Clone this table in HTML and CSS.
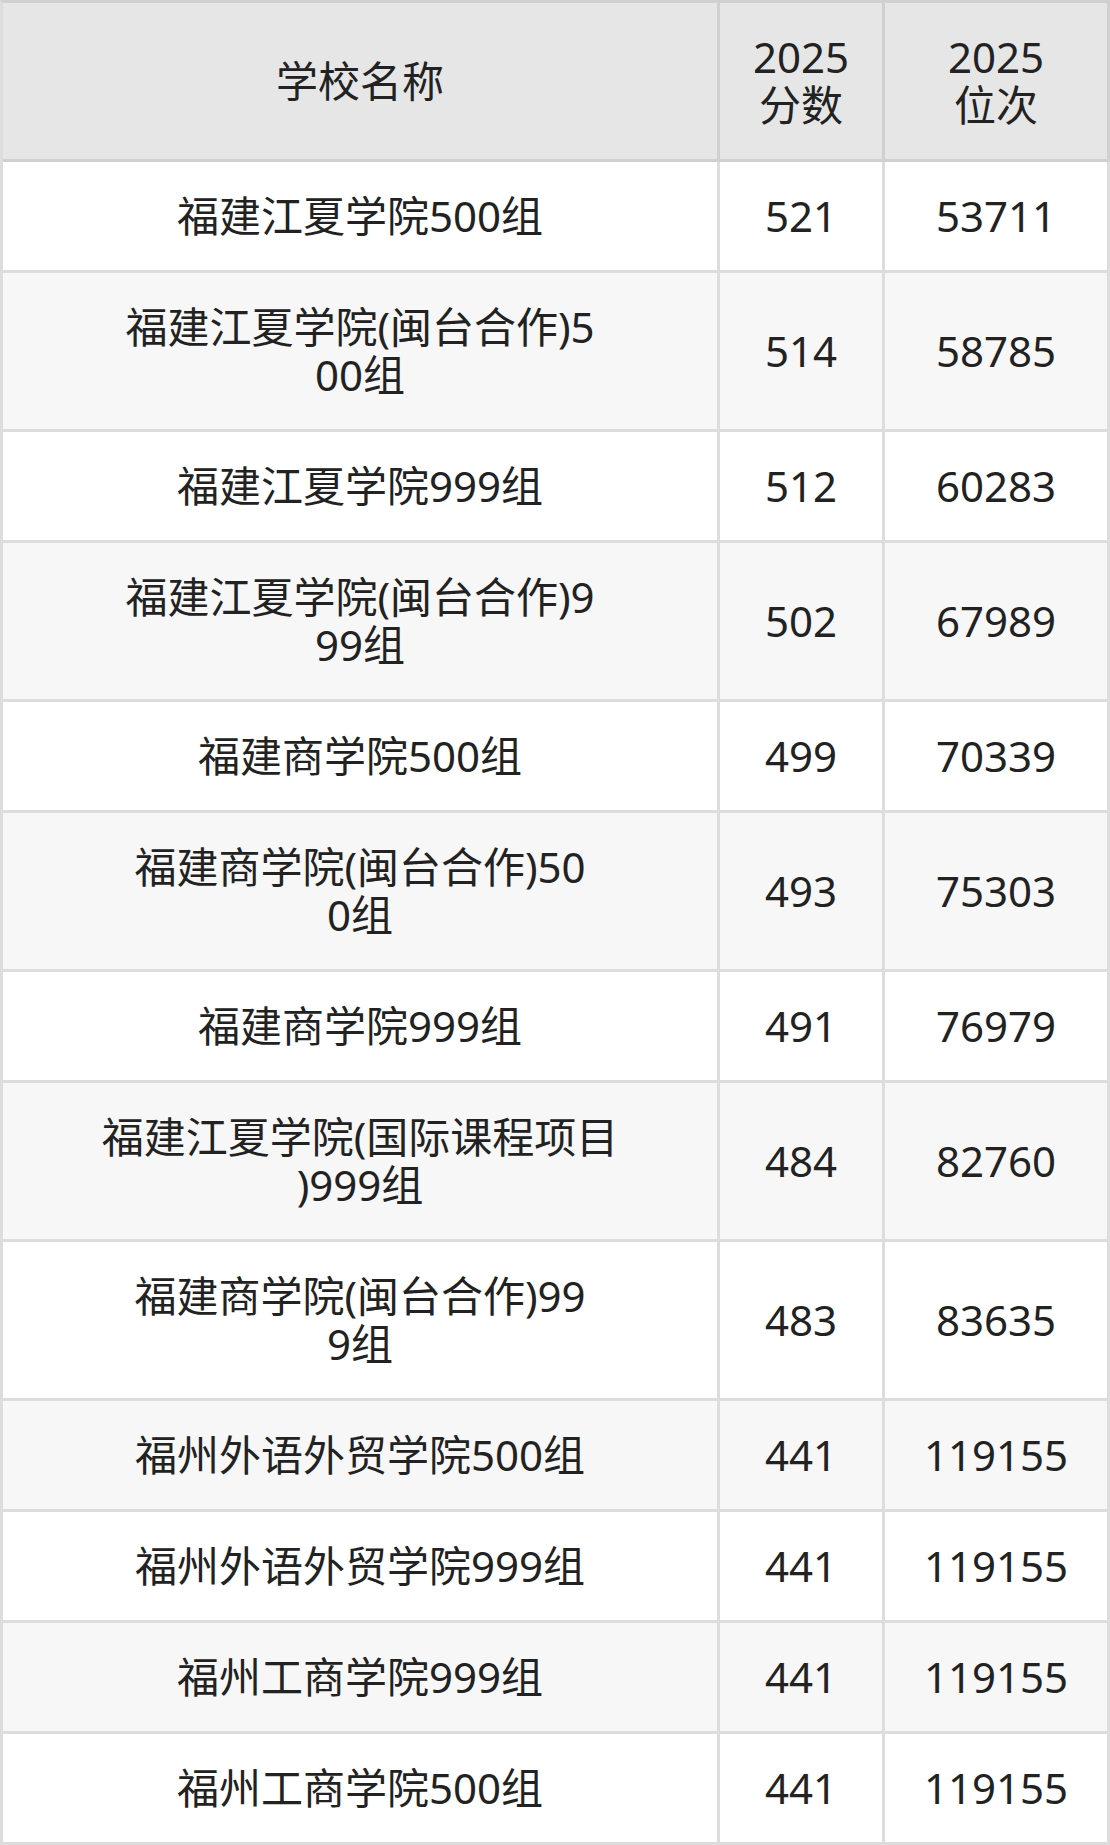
FILE: index.html
```html
<!DOCTYPE html>
<html lang="zh-CN">
<head>
<meta charset="utf-8">
<title>分数位次</title>
<link rel="stylesheet" href="styles.css">
</head>
<body>
<table class="score-table">
  <colgroup>
    <col class="col-name">
    <col class="col-score">
    <col class="col-rank">
  </colgroup>
  <thead>
    <tr>
      <th>学校名称</th>
      <th>2025<br>分数</th>
      <th>2025<br>位次</th>
    </tr>
  </thead>
  <tbody>
    <tr><td>福建江夏学院500组</td><td>521</td><td>53711</td></tr>
    <tr><td>福建江夏学院(闽台合作)5<br>00组</td><td>514</td><td>58785</td></tr>
    <tr><td>福建江夏学院999组</td><td>512</td><td>60283</td></tr>
    <tr><td>福建江夏学院(闽台合作)9<br>99组</td><td>502</td><td>67989</td></tr>
    <tr><td>福建商学院500组</td><td>499</td><td>70339</td></tr>
    <tr><td>福建商学院(闽台合作)50<br>0组</td><td>493</td><td>75303</td></tr>
    <tr><td>福建商学院999组</td><td>491</td><td>76979</td></tr>
    <tr><td>福建江夏学院(国际课程项目<br>)999组</td><td>484</td><td>82760</td></tr>
    <tr><td>福建商学院(闽台合作)99<br>9组</td><td>483</td><td>83635</td></tr>
    <tr><td>福州外语外贸学院500组</td><td>441</td><td>119155</td></tr>
    <tr><td>福州外语外贸学院999组</td><td>441</td><td>119155</td></tr>
    <tr><td>福州工商学院999组</td><td>441</td><td>119155</td></tr>
    <tr><td>福州工商学院500组</td><td>441</td><td>119155</td></tr>
  </tbody>
</table>
</body>
</html>
```

FILE: styles.css
```css
html, body {
  margin: 0;
  padding: 0;
  background: #ffffff;
}

.score-table {
  width: 1110px;
  table-layout: fixed;
  border-collapse: separate;
  border-spacing: 0;
  border-top: 3px solid #d0d0d0;
  border-left: 3px solid #dddddd;
  font-family: "Noto Sans", "Noto Sans CJK SC", sans-serif;
  font-size: 42px;
  line-height: 48px;
  color: #222222;
}

.col-name { width: 717px; }
.col-score { width: 165px; }
.col-rank { width: 225px; }

.score-table th,
.score-table td {
  box-sizing: border-box;
  padding: 30px 10px;
  text-align: center;
  vertical-align: middle;
  white-space: nowrap;
  font-weight: normal;
  border-right: 3px solid #dddddd;
  border-bottom: 3px solid #dddddd;
}

.score-table th {
  background: #e6e6e6;
  border-right-color: #d0d0d0;
  border-bottom-color: #d0d0d0;
}

.score-table tbody tr:nth-child(odd) td {
  background: #ffffff;
}

.score-table tbody tr:nth-child(even) td {
  background: #f7f7f7;
}
```
